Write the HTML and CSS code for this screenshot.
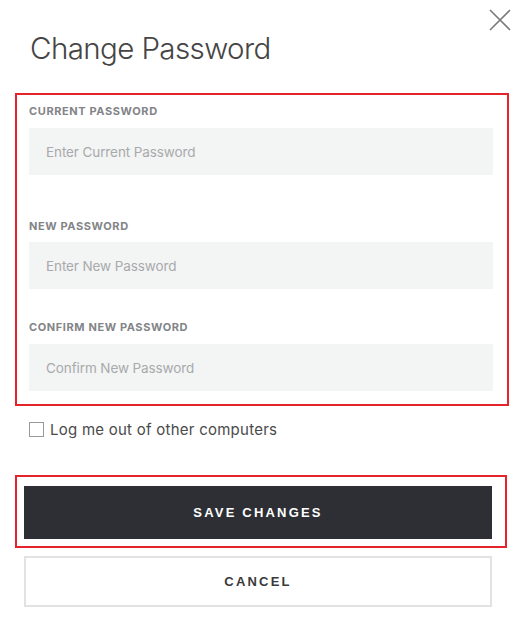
FILE: index.html
```html
<!DOCTYPE html>
<html>
<head>
<meta charset="utf-8">
<link rel="stylesheet" href="styles.css">
</head>
<body>
<div class="modal">
  <div class="header">
    <h1 class="title">Change Password</h1>
    <button class="close" aria-label="Close">
      <svg width="22" height="22" viewBox="0 0 22 22"><path d="M1 1 L21 21 M21 1 L1 21" stroke="#7a7a7a" stroke-width="1.6" fill="none"/></svg>
    </button>
  </div>
  <div class="fields">
    <label class="label l1">CURRENT PASSWORD</label>
    <div class="input">Enter Current Password</div>
    <label class="label l2">NEW PASSWORD</label>
    <div class="input">Enter New Password</div>
    <label class="label l3">CONFIRM NEW PASSWORD</label>
    <div class="input">Confirm New Password</div>
  </div>
  <div class="check-row">
    <span class="checkbox"></span>
    <span class="check-text">Log me out of other computers</span>
  </div>
  <div class="save-wrap">
    <button class="btn save">SAVE CHANGES</button>
  </div>
  <button class="btn cancel">CANCEL</button>
</div>
</body>
</html>
```
FILE: styles.css
```css
* { box-sizing: border-box; }
html, body { margin: 0; padding: 0; background: #fff; }
body { font-family: Inter, "Noto Sans", sans-serif; width: 525px; height: 617px; overflow: hidden; }
.modal { display: flex; flex-direction: column; padding: 0; }
.header { display: flex; justify-content: space-between; align-items: flex-start; height: 93px; }
.title { margin: 0; padding: 29px 0 0 30px; font-weight: 300; font-size: 29.5px; line-height: 38px; color: #454545; letter-spacing: -0.6px; }
.close { background: none; border: 0; padding: 0; margin: 9px 14px 0 0; width: 22px; height: 22px; display: block; }
.close svg { display: block; }
.fields { margin-left: 15px; width: 494px; border: 2px solid #e5232b; padding: 9px 14px 12px 12px; display: flex; flex-direction: column; height: 313px; }
.label { font-size: 11px; line-height: 14px; font-weight: 700; color: #828487; letter-spacing: 0.6px; display: block; }
.l1 { margin-bottom: 10px; }
.l2 { margin-top: 44px; margin-bottom: 9px; }
.l3 { margin-top: 31px; margin-bottom: 10px; }
.input { height: 47px; background: #f3f4f4; padding-left: 17px; display: flex; align-items: center; font-size: 13.5px; color: #a8aaac; letter-spacing: -0.1px; }
.check-row { display: flex; align-items: center; margin: 16px 0 0 29px; height: 15px; }
.checkbox { width: 15px; height: 15px; border: 1.5px solid #999; display: block; margin-right: 6px; }
.check-text { font-size: 15px; color: #4a4a4a; line-height: 15px; letter-spacing: 0.25px; }
.save-wrap { margin: 38px 0 0 15px; width: 492px; height: 73px; border: 2px solid #e5232b; padding: 9px 13px 7px 7px; }
.btn { display: flex; align-items: center; justify-content: center; font-family: "Liberation Sans", Arial, sans-serif; font-weight: 700; font-size: 13px; letter-spacing: 2.2px; width: 468px; cursor: pointer; }
.save { height: 53px; background: #2e2f35; color: #fff; border: 0; }
.cancel { margin: 8px 0 0 24px; height: 51px; background: #fff; border: 2px solid #e2e2e2; color: #3a3a3a; }
```
